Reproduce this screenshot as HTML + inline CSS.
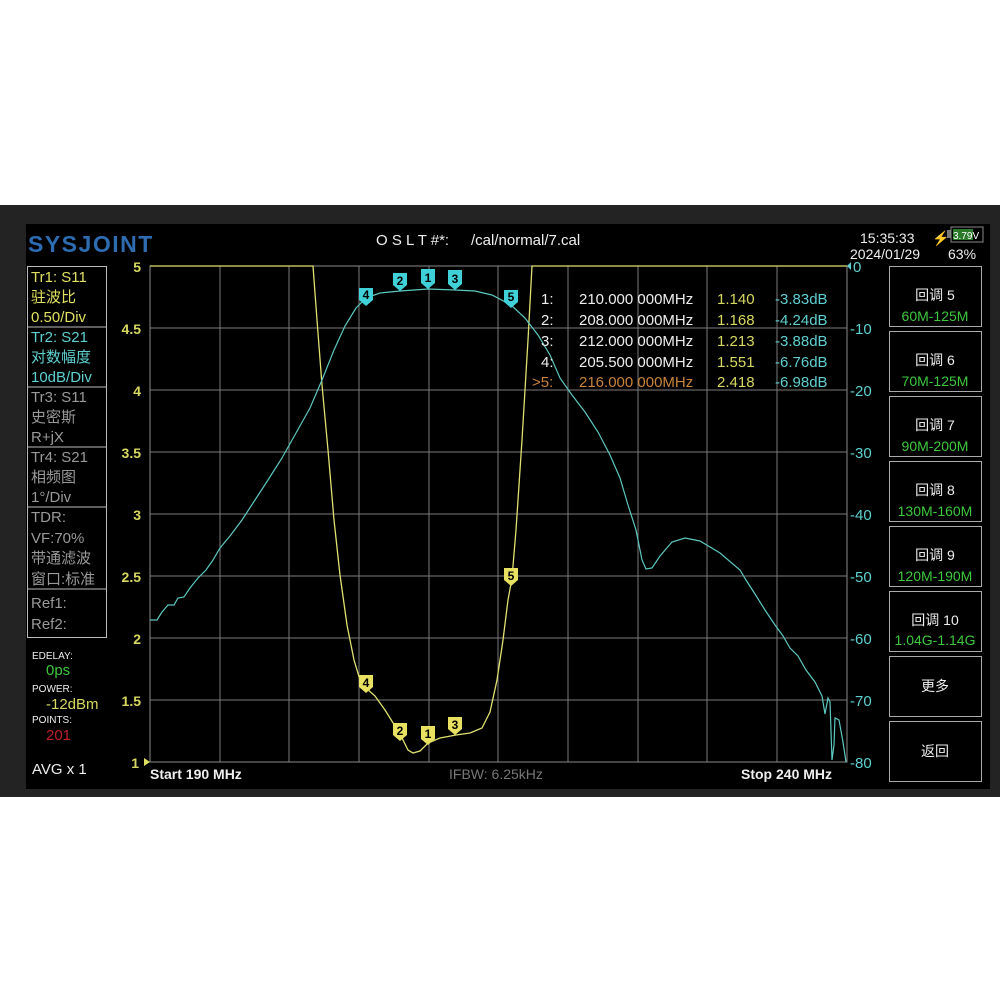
<!DOCTYPE html>
<html><head><meta charset="utf-8"><style>
html,body{margin:0;padding:0;background:#fff;width:1000px;height:1000px;overflow:hidden}
svg{position:absolute;left:0;top:0}
text{font-family:"Liberation Sans","Noto Sans CJK SC",sans-serif}
</style></head><body>
<svg width="1000" height="1000" viewBox="0 0 1000 1000">
<rect x="0" y="205" width="1000" height="592" fill="#232323"/>
<rect x="26" y="224" width="964" height="565" fill="#000"/>
<text x="28" y="252" font-size="23" font-weight="bold" fill="#2d6cb0" letter-spacing="1.5">SYSJOINT</text>
<text x="376" y="245" font-size="15" fill="#eee">O S L T #*:</text>
<text x="471" y="245" font-size="15" fill="#eee">/cal/normal/7.cal</text>
<text x="860" y="243" font-size="14" fill="#eee">15:35:33</text>
<text x="932" y="243" font-size="14" fill="#f5c518">⚡</text>
<rect x="947" y="230" width="4" height="8" fill="#777"/>
<rect x="951" y="227" width="32" height="15" fill="none" stroke="#888"/>
<rect x="953" y="229" width="20" height="11" fill="#2a7a2a"/>
<text x="953" y="239" font-size="10" fill="#fff">3.79V</text>
<text x="850" y="259" font-size="14" fill="#eee">2024/01/29</text>
<text x="948" y="259" font-size="14" fill="#eee">63%</text>
<g stroke="#7a7a7a" stroke-width="1">
<line x1="220" y1="266" x2="220" y2="762"/><line x1="289" y1="266" x2="289" y2="762"/>
<line x1="359" y1="266" x2="359" y2="762"/><line x1="429" y1="266" x2="429" y2="762"/>
<line x1="498" y1="266" x2="498" y2="762"/><line x1="568" y1="266" x2="568" y2="762"/>
<line x1="638" y1="266" x2="638" y2="762"/><line x1="707" y1="266" x2="707" y2="762"/>
<line x1="777" y1="266" x2="777" y2="762"/>
<line x1="150" y1="328" x2="847" y2="328"/><line x1="150" y1="390" x2="847" y2="390"/>
<line x1="150" y1="452" x2="847" y2="452"/><line x1="150" y1="514" x2="847" y2="514"/>
<line x1="150" y1="576" x2="847" y2="576"/><line x1="150" y1="638" x2="847" y2="638"/>
<line x1="150" y1="700" x2="847" y2="700"/>
</g>
<rect x="150" y="266" width="697" height="496" fill="none" stroke="#8a8a8a"/>
<g font-size="14" font-weight="bold" fill="#d8d860" text-anchor="end">
<text x="141" y="272">5</text><text x="141" y="334">4.5</text><text x="141" y="396">4</text>
<text x="141" y="458">3.5</text><text x="141" y="520">3</text><text x="141" y="582">2.5</text>
<text x="141" y="644">2</text><text x="141" y="706">1.5</text><text x="139" y="768">1</text>
</g>
<polygon points="144,758 150,762 144,766" fill="#e0e060"/>
<polygon points="851,262 847,266 851,270" fill="#5fd0d0"/>
<g font-size="15" fill="#5fd0d0">
<text x="853" y="272">0</text><text x="850" y="334">-10</text><text x="850" y="396">-20</text>
<text x="850" y="458">-30</text><text x="850" y="520">-40</text><text x="850" y="582">-50</text>
<text x="850" y="644">-60</text><text x="850" y="706">-70</text><text x="850" y="768">-80</text>
</g>
<polyline fill="none" stroke="#e0e070" stroke-width="1.3" points="150,266 313,266 317,320 322,385 328,450 334,520 340,575 347,625 354,660 360,680 366,688 375,696 385,710 395,726 401,736 408,750 413,753 420,751 428,743 440,738 456,735 470,733 482,728 490,712 497,680 503,640 508,600 512,578 516,530 522,440 528,340 532,266 847,266"/>
<polyline fill="none" stroke="#5cc8c0" stroke-width="1.2" points="150,620 157,620 162,612 168,605 174,605 178,598 184,597 190,588 198,578 206,570 213,560 220,548 230,536 242,520 255,500 268,480 282,458 296,433 310,408 322,380 334,350 345,326 356,308 366,298 380,293 400,291 428,289 455,290 475,291 492,295 511,305 525,318 538,335 550,355 560,378 572,395 585,412 598,432 610,455 620,478 628,505 636,530 642,560 646,569 652,568 660,556 672,542 685,538 700,541 720,553 740,570 746,580 755,594 765,610 775,625 783,636 790,648 798,656 806,670 815,682 822,696 825,714 828,698 830,702 832,760 834,745 835,718 839,720 843,742 846,762"/>
<g font-size="12" font-weight="bold" fill="#000" text-anchor="middle">
<polygon points="359,288 373,288 373,300 366,306 359,300" fill="#40d0d8"/><text x="366" y="299">4</text>
<polygon points="393,273 407,273 407,285 400,291 393,285" fill="#40d0d8"/><text x="400" y="285">2</text>
<polygon points="421,269 435,269 435,283 428,289 421,283" fill="#40d0d8"/><text x="428" y="282">1</text>
<polygon points="448,270 462,270 462,284 455,290 448,284" fill="#40d0d8"/><text x="455" y="283">3</text>
<polygon points="504,290 518,290 518,302 511,308 504,302" fill="#40d0d8"/><text x="511" y="301">5</text>
</g>
<g font-size="12" font-weight="bold" fill="#000" text-anchor="middle">
<polygon points="359,675 373,675 373,687 366,693 359,687" fill="#e8e060"/><text x="366" y="687">4</text>
<polygon points="393,723 407,723 407,735 400,741 393,735" fill="#e8e060"/><text x="400" y="735">2</text>
<polygon points="421,726 435,726 435,739 428,745 421,739" fill="#e8e060"/><text x="428" y="738">1</text>
<polygon points="448,717 462,717 462,729 455,735 448,729" fill="#e8e060"/><text x="455" y="729">3</text>
<polygon points="504,568 518,568 518,580 511,586 504,580" fill="#e8e060"/><text x="511" y="580">5</text>
</g>
<g font-size="15">
<text x="541" y="304" fill="#eee">1:</text><text x="579" y="304" fill="#eee">210.000 000MHz</text><text x="717" y="304" fill="#d8d860">1.140</text><text x="775" y="304" fill="#5fd0d0">-3.83dB</text>
<text x="541" y="325" fill="#eee">2:</text><text x="579" y="325" fill="#eee">208.000 000MHz</text><text x="717" y="325" fill="#d8d860">1.168</text><text x="775" y="325" fill="#5fd0d0">-4.24dB</text>
<text x="541" y="346" fill="#eee">3:</text><text x="579" y="346" fill="#eee">212.000 000MHz</text><text x="717" y="346" fill="#d8d860">1.213</text><text x="775" y="346" fill="#5fd0d0">-3.88dB</text>
<text x="541" y="367" fill="#eee">4:</text><text x="579" y="367" fill="#eee">205.500 000MHz</text><text x="717" y="367" fill="#d8d860">1.551</text><text x="775" y="367" fill="#5fd0d0">-6.76dB</text>
<text x="532" y="387" fill="#c8843c">&gt;5:</text><text x="579" y="387" fill="#c8843c">216.000 000MHz</text><text x="717" y="387" fill="#d8d860">2.418</text><text x="775" y="387" fill="#5fd0d0">-6.98dB</text>
</g>
<text x="150" y="779" font-size="14" font-weight="bold" fill="#eee">Start  190 MHz</text>
<text x="449" y="779" font-size="14" fill="#777">IFBW: 6.25kHz</text>
<text x="741" y="779" font-size="14" font-weight="bold" fill="#eee">Stop  240 MHz</text>
<g fill="none" stroke="#bbb" stroke-width="1">
<rect x="27.5" y="266.5" width="79" height="371"/>
<line x1="27" y1="327" x2="107" y2="327"/><line x1="27" y1="387" x2="107" y2="387"/>
<line x1="27" y1="447" x2="107" y2="447"/><line x1="27" y1="507" x2="107" y2="507"/>
<line x1="27" y1="589" x2="107" y2="589"/>
</g>
<g font-size="15">
<text x="31" y="282" fill="#e0e060">Tr1:  S11</text><text x="31" y="302" fill="#e0e060">驻波比</text><text x="31" y="322" fill="#e0e060">0.50/Div</text>
<text x="31" y="342" fill="#5fd0d0">Tr2:  S21</text><text x="31" y="362" fill="#5fd0d0">对数幅度</text><text x="31" y="382" fill="#5fd0d0">10dB/Div</text>
<text x="31" y="402" fill="#999">Tr3:  S11</text><text x="31" y="422" fill="#999">史密斯</text><text x="31" y="442" fill="#999">R+jX</text>
<text x="31" y="462" fill="#999">Tr4:  S21</text><text x="31" y="482" fill="#999">相频图</text><text x="31" y="502" fill="#999">1°/Div</text>
<text x="31" y="522" fill="#999">TDR:</text><text x="31" y="543" fill="#999">VF:70%</text><text x="31" y="563" fill="#999">带通滤波</text><text x="31" y="584" fill="#999">窗口:标准</text>
<text x="31" y="608" fill="#999">Ref1:</text><text x="31" y="629" fill="#999">Ref2:</text>
</g>
<g>
<text x="32" y="659" font-size="10" fill="#eee">EDELAY:</text>
<text x="46" y="675" font-size="15" fill="#3ec83e">0ps</text>
<text x="32" y="692" font-size="10" fill="#eee">POWER:</text>
<text x="46" y="709" font-size="15" fill="#d8d860">-12dBm</text>
<text x="32" y="723" font-size="10" fill="#eee">POINTS:</text>
<text x="46" y="740" font-size="15" fill="#c0202a">201</text>
<text x="32" y="774" font-size="15" fill="#eee">AVG x 1</text>
</g>
<g fill="none" stroke="#aaa">
<rect x="889.5" y="266.5" width="92" height="60"/><rect x="889.5" y="331.5" width="92" height="60"/>
<rect x="889.5" y="396.5" width="92" height="60"/><rect x="889.5" y="461.5" width="92" height="60"/>
<rect x="889.5" y="526.5" width="92" height="60"/><rect x="889.5" y="591.5" width="92" height="60"/>
<rect x="889.5" y="656.5" width="92" height="60"/><rect x="889.5" y="721.5" width="92" height="60"/>
</g>
<g font-size="14" text-anchor="middle">
<text x="935" y="300" fill="#eee">回调 5</text><text x="935" y="321" fill="#3ec83e">60M-125M</text>
<text x="935" y="365" fill="#eee">回调 6</text><text x="935" y="386" fill="#3ec83e">70M-125M</text>
<text x="935" y="430" fill="#eee">回调 7</text><text x="935" y="451" fill="#3ec83e">90M-200M</text>
<text x="935" y="495" fill="#eee">回调 8</text><text x="935" y="516" fill="#3ec83e">130M-160M</text>
<text x="935" y="560" fill="#eee">回调 9</text><text x="935" y="581" fill="#3ec83e">120M-190M</text>
<text x="935" y="625" fill="#eee">回调 10</text><text x="935" y="645" fill="#3ec83e">1.04G-1.14G</text>
<text x="935" y="691" fill="#eee">更多</text>
<text x="935" y="756" fill="#eee">返回</text>
</g>
</svg>
</body></html>
